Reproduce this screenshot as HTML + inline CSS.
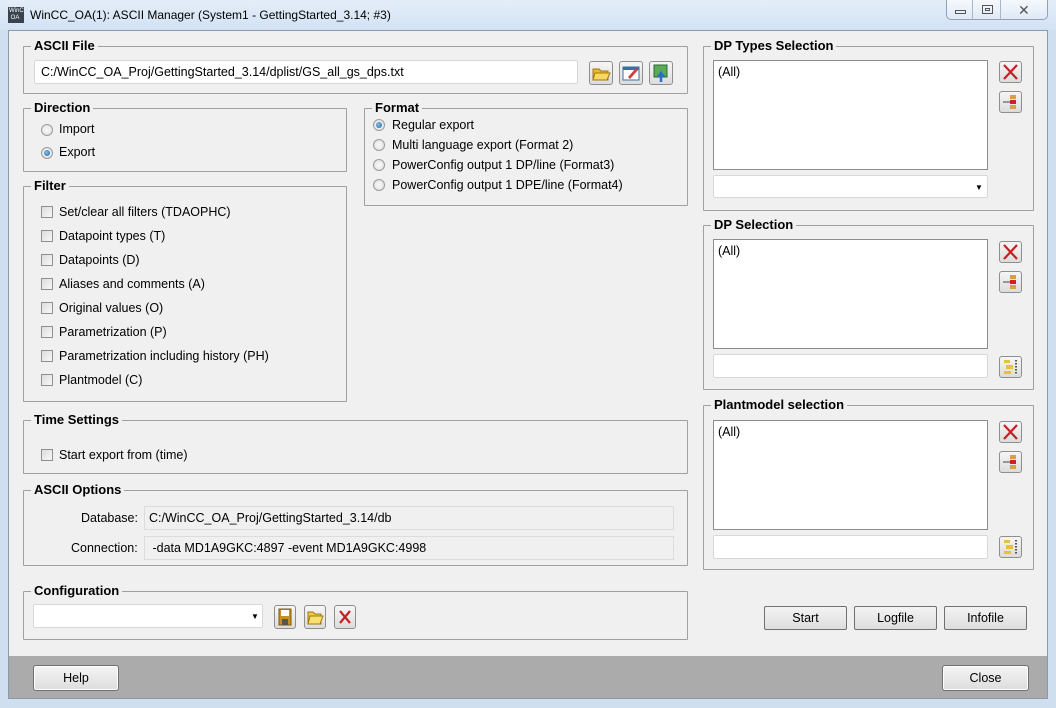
<!DOCTYPE html>
<html><head><meta charset="utf-8"><style>
*{box-sizing:border-box}
body{margin:0;width:1056px;height:708px;overflow:hidden;background:#cfdff0;font-family:"Liberation Sans",sans-serif;font-size:12.5px;color:#000;position:relative}
.a{position:absolute}
.title{left:0;top:0;width:1056px;height:30px;background:linear-gradient(#e4eef9,#d2e2f3)}
.body{left:8px;top:30px;width:1040px;height:626px;background:#f0f0f0;border:1px solid #8a9aac;border-bottom:none}
.bot{left:8px;top:656px;width:1040px;height:43px;background:#ababab;border:1px solid #8a9aac;border-top:none}
.g{position:absolute;border:1px solid #a0a0a0;border-radius:1px}
.lg{position:absolute;top:-9px;left:7px;background:#f0f0f0;padding:0 3px;font-weight:bold;font-size:13px;line-height:16px}
.in{position:absolute;background:#fff;border:1px solid #d8d8d8;border-radius:2px;padding:3px 6px;line-height:16px;white-space:nowrap}
.ro{position:absolute;background:#f0f0f0;border:1px solid #dcdcdc;padding:3px 4px;line-height:16px;white-space:nowrap}
.lst{position:absolute;background:#fff;border:1px solid #8c8c8c;padding:4px 4px;line-height:14px}
.ib{position:absolute;width:24px;height:24px;border:1px solid #8e8e8e;border-radius:3px;background:linear-gradient(#f6f6f6,#dcdcdc)}
.btn{position:absolute;height:24px;border:1px solid #707070;border-radius:2px;background:linear-gradient(#f4f4f4,#dedede);text-align:center;line-height:22px}
.rd{position:absolute;width:12px;height:12px;border-radius:50%;border:1px solid #9a9a9a;background:radial-gradient(#fafafa,#dcdcdc)}
.rd.on::after{content:"";position:absolute;left:2px;top:2px;width:6px;height:6px;border-radius:50%;background:radial-gradient(circle at 40% 40%,#7fc3f0,#1a5e9a)}
.cb{position:absolute;width:12px;height:12px;border:1px solid #909090;background:linear-gradient(135deg,#dcdcdc,#f8f8f8)}
.t{position:absolute;white-space:nowrap;line-height:16px}
</style></head><body>
<div class="a title"></div>
<div class="a" style="left:8px;top:7px;width:16px;height:16px;background:#39434e;color:#fff;font-size:6px;line-height:7px;padding:1px">WinC<br>&nbsp;OA</div>
<div class="t" style="left:30px;top:7px;font-size:12px">WinCC_OA(1): ASCII Manager (System1 - GettingStarted_3.14; #3)</div>
<div class="a" style="left:946px;top:0;width:102px;height:20px;border:1px solid #8fa2b8;border-top:none;border-radius:0 0 5px 5px;background:linear-gradient(#f5f9fd,#dfe9f5)"></div>
<div class="a" style="left:972px;top:0;width:1px;height:19px;background:#a9b8c9"></div>
<div class="a" style="left:1000px;top:0;width:1px;height:19px;background:#a9b8c9"></div>
<div class="a" style="left:955px;top:10px;width:11px;height:4px;border:1px solid #555"></div>
<div class="a" style="left:982px;top:5px;width:11px;height:9px;border:1px solid #555"><div class="a" style="left:2px;top:2px;width:5px;height:3px;border:1px solid #555"></div></div>
<div class="t" style="left:1018px;top:2px;font-size:14px;color:#555">✕</div>
<div class="a body"></div>
<div class="a bot"></div>

<!-- ASCII File -->
<div class="g" style="left:23px;top:46px;width:665px;height:48px"><div class="lg">ASCII File</div></div>
<div class="in" style="left:34px;top:60px;width:544px;height:24px">C:/WinCC_OA_Proj/GettingStarted_3.14/dplist/GS_all_gs_dps.txt</div>
<div class="ib" style="left:589px;top:61px"><svg width="22" height="22"><path d="M3 7h6l2 2h7v9H3z" fill="#e8b830" stroke="#a07810"/><path d="M5 11h15l-3 7H3z" fill="#f8d860" stroke="#a07810"/></svg></div>
<div class="ib" style="left:619px;top:61px"><svg width="22" height="22"><rect x="3" y="5" width="16" height="13" fill="#fff" stroke="#3a6ea8"/><rect x="3" y="5" width="16" height="3" fill="#3a6ea8"/><path d="M8 15l8-9 2 2-8 9z" fill="#d04040"/></svg></div>
<div class="ib" style="left:649px;top:61px"><svg width="22" height="22"><rect x="4" y="3" width="13" height="12" fill="#5aaa5a" stroke="#2a6a2a"/><path d="M11 20v-8M8 15l3-4 3 4" stroke="#2a6ec8" stroke-width="2.5" fill="none"/></svg></div>

<!-- Direction -->
<div class="g" style="left:23px;top:108px;width:324px;height:64px"><div class="lg">Direction</div></div>
<div class="rd" style="left:41px;top:124px"></div><div class="t" style="left:59px;top:121px">Import</div>
<div class="rd on" style="left:41px;top:147px"></div><div class="t" style="left:59px;top:144px">Export</div>

<!-- Format -->
<div class="g" style="left:364px;top:108px;width:324px;height:98px"><div class="lg">Format</div></div>
<div class="rd on" style="left:373px;top:119px"></div><div class="t" style="left:392px;top:117px">Regular export</div>
<div class="rd" style="left:373px;top:139px"></div><div class="t" style="left:392px;top:137px">Multi language export (Format 2)</div>
<div class="rd" style="left:373px;top:159px"></div><div class="t" style="left:392px;top:157px">PowerConfig output 1 DP/line (Format3)</div>
<div class="rd" style="left:373px;top:179px"></div><div class="t" style="left:392px;top:177px">PowerConfig output 1 DPE/line (Format4)</div>

<!-- Filter -->
<div class="g" style="left:23px;top:186px;width:324px;height:216px"><div class="lg">Filter</div></div>
<div class="cb" style="left:41px;top:206px"></div><div class="t" style="left:59px;top:204px">Set/clear all filters (TDAOPHC)</div>
<div class="cb" style="left:41px;top:230px"></div><div class="t" style="left:59px;top:228px">Datapoint types (T)</div>
<div class="cb" style="left:41px;top:254px"></div><div class="t" style="left:59px;top:252px">Datapoints (D)</div>
<div class="cb" style="left:41px;top:278px"></div><div class="t" style="left:59px;top:276px">Aliases and comments (A)</div>
<div class="cb" style="left:41px;top:302px"></div><div class="t" style="left:59px;top:300px">Original values (O)</div>
<div class="cb" style="left:41px;top:326px"></div><div class="t" style="left:59px;top:324px">Parametrization (P)</div>
<div class="cb" style="left:41px;top:350px"></div><div class="t" style="left:59px;top:348px">Parametrization including history (PH)</div>
<div class="cb" style="left:41px;top:374px"></div><div class="t" style="left:59px;top:372px">Plantmodel (C)</div>

<!-- Time -->
<div class="g" style="left:23px;top:420px;width:665px;height:54px"><div class="lg">Time Settings</div></div>
<div class="cb" style="left:41px;top:449px"></div><div class="t" style="left:59px;top:447px">Start export from (time)</div>

<!-- ASCII Options -->
<div class="g" style="left:23px;top:490px;width:665px;height:76px"><div class="lg">ASCII Options</div></div>
<div class="t" style="left:81px;top:510px">Database:</div>
<div class="ro" style="left:144px;top:506px;width:530px;height:24px">C:/WinCC_OA_Proj/GettingStarted_3.14/db</div>
<div class="t" style="left:71px;top:540px">Connection:</div>
<div class="ro" style="left:144px;top:536px;width:530px;height:24px">&nbsp;-data MD1A9GKC:4897 -event MD1A9GKC:4998</div>

<!-- Configuration -->
<div class="g" style="left:23px;top:591px;width:665px;height:49px"><div class="lg">Configuration</div></div>
<div class="in" style="left:33px;top:604px;width:230px;height:24px"></div>
<div class="t" style="left:251px;top:609px;font-size:8px">▼</div>
<div class="ib" style="left:274px;top:605px;width:22px"><svg width="20" height="22"><rect x="4" y="3" width="12" height="16" fill="#c89020" stroke="#7a5a10"/><rect x="6" y="4" width="8" height="6" fill="#fff"/><rect x="7" y="13" width="6" height="6" fill="#555"/></svg></div>
<div class="ib" style="left:304px;top:605px;width:22px"><svg width="20" height="22"><path d="M3 6h5l2 2h6v10H3z" fill="#f0c840" stroke="#a07810"/><path d="M5 10h13l-3 8H3z" fill="#f8e070" stroke="#a07810"/></svg></div>
<div class="ib" style="left:334px;top:605px;width:22px"><svg width="20" height="22"><path d="M5 5l10 12M15 5L5 17" stroke="#c82020" stroke-width="2.2"/></svg></div>

<!-- DP Types -->
<div class="g" style="left:703px;top:46px;width:331px;height:165px"><div class="lg">DP Types Selection</div></div>
<div class="lst" style="left:713px;top:60px;width:275px;height:110px">(All)</div>
<div class="in" style="left:713px;top:175px;width:275px;height:23px"></div>
<div class="t" style="left:975px;top:180px;font-size:8px">▼</div>

<div class="g" style="left:703px;top:225px;width:331px;height:165px"><div class="lg">DP Selection</div></div>
<div class="lst" style="left:713px;top:239px;width:275px;height:110px">(All)</div>
<div class="in" style="left:713px;top:354px;width:275px;height:24px"></div>

<div class="g" style="left:703px;top:405px;width:331px;height:165px"><div class="lg">Plantmodel selection</div></div>
<div class="lst" style="left:713px;top:420px;width:275px;height:110px">(All)</div>
<div class="in" style="left:713px;top:535px;width:275px;height:24px"></div>

<!-- right icon buttons -->
<div class="ib" style="left:999px;top:61px;width:23px;height:22px"><svg width="21" height="20"><path d="M4 3l13 14M17 3L4 17" stroke="#c82020" stroke-width="2.2"/></svg></div>
<div class="ib" style="left:999px;top:91px;width:23px;height:22px"><svg width="21" height="20"><rect x="10" y="3" width="6" height="4" fill="#d8a040"/><rect x="10" y="8" width="6" height="4" fill="#d02020"/><rect x="10" y="13" width="6" height="4" fill="#d8a040"/><path d="M3 10h7" stroke="#444"/></svg></div>
<div class="ib" style="left:999px;top:241px;width:23px;height:22px"><svg width="21" height="20"><path d="M4 3l13 14M17 3L4 17" stroke="#c82020" stroke-width="2.2"/></svg></div>
<div class="ib" style="left:999px;top:271px;width:23px;height:22px"><svg width="21" height="20"><rect x="10" y="3" width="6" height="4" fill="#d8a040"/><rect x="10" y="8" width="6" height="4" fill="#d02020"/><rect x="10" y="13" width="6" height="4" fill="#d8a040"/><path d="M3 10h7" stroke="#444"/></svg></div>
<div class="ib" style="left:999px;top:356px;width:23px;height:22px"><svg width="21" height="20"><rect x="4" y="3" width="6" height="3" fill="#e8c040"/><rect x="6" y="8" width="7" height="4" fill="#e8c040"/><rect x="4" y="14" width="7" height="3" fill="#e8c040"/><path d="M16 3v14" stroke="#555" stroke-dasharray="1.5 1.5" stroke-width="2"/></svg></div>
<div class="ib" style="left:999px;top:421px;width:23px;height:22px"><svg width="21" height="20"><path d="M4 3l13 14M17 3L4 17" stroke="#c82020" stroke-width="2.2"/></svg></div>
<div class="ib" style="left:999px;top:451px;width:23px;height:22px"><svg width="21" height="20"><rect x="10" y="3" width="6" height="4" fill="#d8a040"/><rect x="10" y="8" width="6" height="4" fill="#d02020"/><rect x="10" y="13" width="6" height="4" fill="#d8a040"/><path d="M3 10h7" stroke="#444"/></svg></div>
<div class="ib" style="left:999px;top:536px;width:23px;height:22px"><svg width="21" height="20"><rect x="4" y="3" width="6" height="3" fill="#e8c040"/><rect x="6" y="8" width="7" height="4" fill="#e8c040"/><rect x="4" y="14" width="7" height="3" fill="#e8c040"/><path d="M16 3v14" stroke="#555" stroke-dasharray="1.5 1.5" stroke-width="2"/></svg></div>

<div class="btn" style="left:764px;top:606px;width:83px">Start</div>
<div class="btn" style="left:854px;top:606px;width:83px">Logfile</div>
<div class="btn" style="left:944px;top:606px;width:83px">Infofile</div>
<div class="btn" style="left:34px;top:666px;width:84px;border-color:#fff;outline:1px solid #707070">Help</div>
<div class="btn" style="left:943px;top:666px;width:85px;border-color:#fff;outline:1px solid #707070">Close</div>
</body></html>
